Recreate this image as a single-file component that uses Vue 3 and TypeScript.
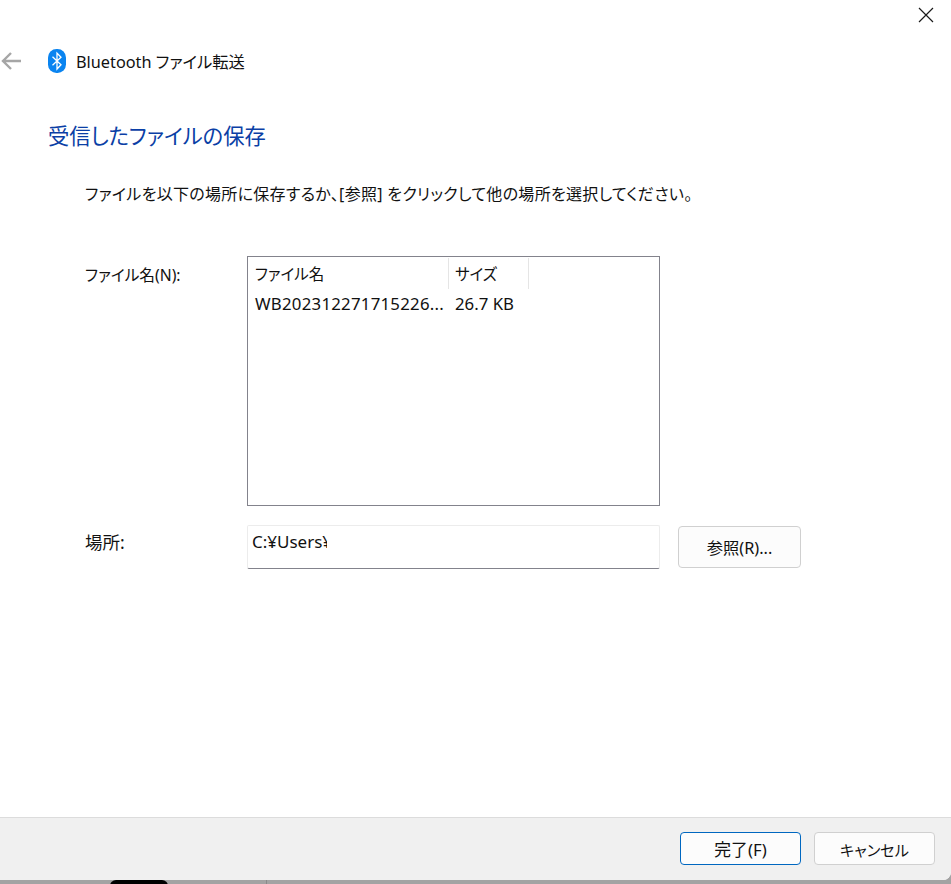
<script setup lang="ts">
const files = [{ name: 'WB202312271715226...', size: '26.7 KB' }]
</script>

<template>
  <div class="screen">
    <div class="window">
      <div class="close-row">
        <svg class="close" width="16" height="16" viewBox="0 0 16 16" fill="none" stroke="#1a1a1a" stroke-width="1.2">
          <path d="M1 1 L15 15 M15 1 L1 15" />
        </svg>
      </div>
      <div class="nav">
        <svg class="back" width="20" height="18" viewBox="0 0 20 18" fill="none" stroke="#a6a6a6" stroke-width="2.4">
          <path d="M20 9 H2 M10 1 L2 9 L10 17" />
        </svg>
        <svg class="bt" width="18" height="24" viewBox="0 0 18 24">
          <rect width="18" height="24" rx="8.5" fill="#0a84f0" />
          <path d="M4.5 7.8 L13 15.8 L9 20 V4 L13 8.2 L4.5 16.2" fill="none" stroke="#fff" stroke-width="1.3" />
        </svg>
        <span class="nav-title">Bluetooth ファイル転送</span>
      </div>
      <div class="content">
        <h1 class="heading">受信したファイルの保存</h1>
        <p class="intro">ファイルを以下の場所に保存するか、[参照] をクリックして他の場所を選択してください。</p>
        <div class="form">
          <label class="label label-n">ファイル名(N):</label>
          <div class="list">
            <div class="list-head">
              <div class="col col-name">ファイル名</div>
              <div class="col col-size">サイズ</div>
            </div>
            <div v-for="f in files" :key="f.name" class="list-row">
              <div class="cell-name">{{ f.name }}</div>
              <div class="cell-size">{{ f.size }}</div>
            </div>
          </div>
          <span></span>
          <label class="label label-p">場所:</label>
          <div class="path"><span class="path-text">C:¥Users¥</span></div>
          <button class="btn browse">参照(R)...</button>
        </div>
      </div>
      <div class="footer">
        <button class="btn primary">完了(F)</button>
        <button class="btn cancel">キャンセル</button>
      </div>
    </div>
    <div class="strip">
      <div class="blob"></div>
      <div class="tick"></div>
    </div>
  </div>
</template>

<style scoped>
.screen {
  width: 951px;
  height: 884px;
  display: flex;
  flex-direction: column;
  overflow: hidden;
  background: #a3a3a3;
  font-family: "Noto Sans", "Noto Sans CJK JP", sans-serif;
  font-feature-settings: "palt";
  color: #111;
  font-size: 16px;
}
.window {
  height: 880px;
  display: flex;
  flex-direction: column;
  background: #fff;
  border-bottom-right-radius: 8px;
  overflow: hidden;
}
.close-row {
  height: 40px;
  display: flex;
  justify-content: flex-end;
  padding: 7px 17px 0 0;
  box-sizing: border-box;
}
.nav {
  height: 42px;
  display: flex;
  align-items: center;
  padding-left: 1px;
}
.back { margin-right: 27px; }
.bt { margin-right: 10px; }
.nav-title { font-size: 16.3px; }
.content {
  flex: 1;
  padding-left: 48px;
}
.heading {
  margin: 0;
  padding-top: 40px;
  font-size: 21.3px;
  font-weight: 400;
  line-height: 28px;
  color: #0b3fa6;
}
.intro {
  margin: 0;
  padding: 33px 0 0 37px;
  line-height: 22px;
  font-size: 16px;
  letter-spacing: 0.3px;
}
.form {
  display: grid;
  grid-template-columns: 199px 413px 141px;
  padding-top: 51px;
}
.label { padding-left: 37px; line-height: 22px; }
.label-n { padding-top: 8px; font-size: 15.7px; }
.label-p { padding-top: 6px; font-size: 17.5px; }
.list {
  height: 250px;
  box-sizing: border-box;
  border: 1px solid #83838c;
  background: #fff;
  margin-bottom: 19px;
}
.list-head {
  display: flex;
  height: 32px;
  padding-top: 1px;
  box-sizing: border-box;
}
.col {
  line-height: 32px;
  padding-left: 6px;
  box-sizing: border-box;
  border-right: 1px solid #e5e5e5;
}
.col-name { width: 201px; padding-left: 7px; font-size: 15.5px; }
.col-size { width: 80px; font-size: 15.5px; }
.list-row {
  display: flex;
  line-height: 30px;
  font-size: 16.8px;
}
.cell-name { width: 201px; padding-left: 7px; box-sizing: border-box; white-space: nowrap; letter-spacing: 0.25px; }
.cell-size { padding-left: 6px; }
.path {
  height: 44px;
  box-sizing: border-box;
  border: 1px solid #ececec;
  border-bottom: 1px solid #83838c;
  border-radius: 2px;
  background: #fff;
  padding-left: 4px;
  line-height: 32px;
  font-size: 17px;
}
.path-text {
  display: block;
  width: 75px;
  overflow: hidden;
  white-space: nowrap;
}
.btn {
  font: inherit;
  font-feature-settings: inherit;
  color: inherit;
  background: #fcfcfc;
  border: 1px solid #d0d0d0;
  border-radius: 4px;
  height: 33px;
  padding: 0;
  box-sizing: border-box;
}
.browse {
  width: 123px;
  height: 42px;
  margin: 1px 0 0 18px;
  font-size: 16.3px;
}
.footer {
  height: 63px;
  box-sizing: border-box;
  border-top: 1px solid #dcdcdc;
  background: #f0f0f0;
  display: flex;
  justify-content: flex-end;
  align-items: flex-start;
  gap: 13px;
  padding: 14px 16px 0 0;
}
.primary {
  width: 121px;
  border-color: #0067c0;
  font-size: 16.8px;
}
.cancel { width: 121px; font-size: 15.2px; }
.strip {
  flex: 1;
  position: relative;
}
.blob {
  position: absolute;
  left: 110px;
  top: 0;
  width: 58px;
  height: 6px;
  background: #000;
  border-radius: 10px 10px 0 0;
}
.tick {
  position: absolute;
  left: 266px;
  top: 0;
  width: 1px;
  height: 4px;
  background: #8a8a8a;
}
</style>
